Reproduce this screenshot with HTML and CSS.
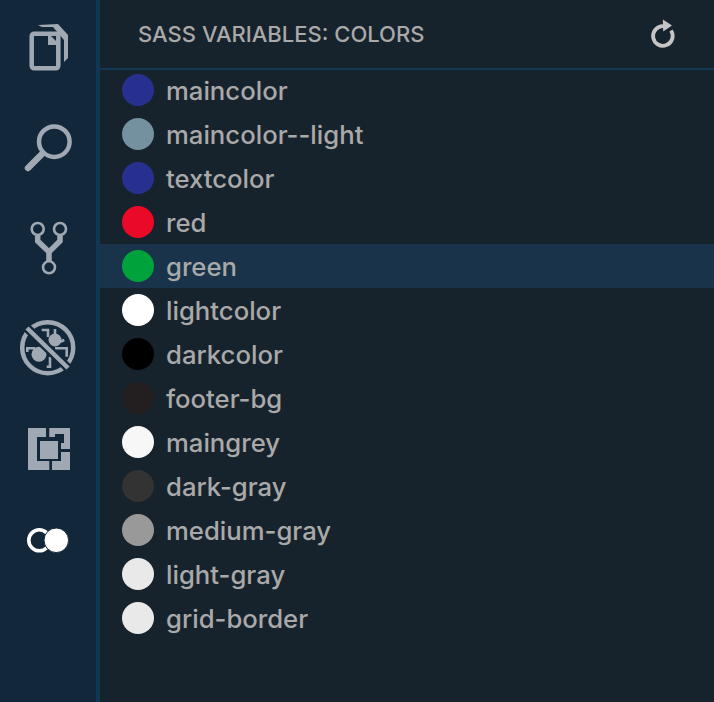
FILE: index.html
```html
<!DOCTYPE html>
<html lang="en">
<head>
  <meta charset="UTF-8">
  <title>Sass Variables: Colors</title>
  <link rel="stylesheet" href="styles.css">
</head>
<body>
  <div class="app">
    <nav class="activity-bar">
      <svg class="icon" viewBox="0 0 60 60">
        <path class="fill" d="M20 8 L40 7 L50 18 V41 L46 45 V23 L35 10 L24 10 Z"/>
        <rect class="line" x="13.7" y="16.7" width="26.6" height="34.6" rx="2.5"/>
        <path class="fill" d="M30 16 L42 28 H30 Z"/>
      </svg>
      <svg class="icon" viewBox="0 0 60 60">
        <circle class="line" cx="36.3" cy="24.7" r="15.3" stroke-width="4.5"/>
        <path class="line thick" d="M23 38 L10 51"/>
      </svg>
      <svg class="icon" viewBox="0 0 60 60">
        <circle class="line thin" cx="19.7" cy="12" r="6"/>
        <circle class="line thin" cx="42" cy="12" r="6"/>
        <circle class="line thin" cx="31" cy="50.3" r="6"/>
        <path class="line joint" d="M19.7 19 V24 L31 35 L42 24 V19 M31 35 V44"/>
      </svg>
      <svg class="icon" viewBox="0 0 60 60">
        <circle class="line" cx="29.7" cy="30.7" r="25.5"/>
        <circle class="fill" cx="21" cy="37.3" r="7.5"/>
        <circle class="fill" cx="37" cy="23" r="6.5"/>
        <path class="line thin" d="M9.3 35 V31.3 H17 M28.7 49.7 H32 V40 M23.7 13 H30 V20 M37 18 V12 M46.3 23 L38.7 26.3 M37 31.3 H48.7 V39.7"/>
        <path class="gap" d="M9 11 L50 51"/>
        <path class="line" d="M9 11 L50 51"/>
      </svg>
      <svg class="icon" viewBox="0 0 60 60">
        <path class="fill" d="M10 11 H28 V20 H19 V44 H31.3 V53 H10 Z"/>
        <path class="fill" d="M43 35 H52 V53 H34 V44 H43 Z"/>
        <path class="fill" d="M31.3 11 H52 V32 H43 V20 H31.3 Z"/>
        <path class="notch" d="M37 17 H46 V26 H43 V20 H37 Z"/>
        <rect class="fill" x="22" y="24" width="18" height="18"/>
      </svg>
      <svg class="icon" viewBox="0 0 60 60">
        <circle class="ring" cx="21.3" cy="23.3" r="10.5"/>
        <circle class="dot" cx="38.3" cy="23.3" r="12.3"/>
      </svg>
    </nav>

    <main class="panel">
      <header class="panel-header">
        <h2 class="panel-title">SASS VARIABLES: COLORS</h2>
        <svg class="refresh" viewBox="0 0 30 30">
          <path class="refresh-arc" d="M15.5 7.2 A9.8 9.8 0 1 0 23 11.5"/>
          <path class="refresh-head" d="M14.8 0.5 L24 6.6 L15.2 12.5 Z"/>
        </svg>
      </header>

      <ul class="color-list">
        <li class="color-row"><span class="swatch swatch-main"></span><span class="color-name">maincolor</span></li>
        <li class="color-row"><span class="swatch swatch-main-light"></span><span class="color-name">maincolor--light</span></li>
        <li class="color-row"><span class="swatch swatch-main"></span><span class="color-name">textcolor</span></li>
        <li class="color-row"><span class="swatch swatch-red"></span><span class="color-name">red</span></li>
        <li class="color-row selected"><span class="swatch swatch-green"></span><span class="color-name">green</span></li>
        <li class="color-row"><span class="swatch swatch-white"></span><span class="color-name">lightcolor</span></li>
        <li class="color-row"><span class="swatch swatch-black"></span><span class="color-name">darkcolor</span></li>
        <li class="color-row"><span class="swatch swatch-footer"></span><span class="color-name">footer-bg</span></li>
        <li class="color-row"><span class="swatch swatch-maingrey"></span><span class="color-name">maingrey</span></li>
        <li class="color-row"><span class="swatch swatch-dark"></span><span class="color-name">dark-gray</span></li>
        <li class="color-row"><span class="swatch swatch-medium"></span><span class="color-name">medium-gray</span></li>
        <li class="color-row"><span class="swatch swatch-light"></span><span class="color-name">light-gray</span></li>
        <li class="color-row"><span class="swatch swatch-light"></span><span class="color-name">grid-border</span></li>
      </ul>
    </main>
  </div>
</body>
</html>
```

FILE: styles.css
```css
html, body {
  height: 100%;
  margin: 0;
}

body {
  font-family: Inter, "Liberation Sans", sans-serif;
  background-color: #17232c;
  overflow: hidden;
}

.app {
  display: flex;
  height: 100%;
}

/* left icon strip */
.activity-bar {
  width: 96px;
  flex-shrink: 0;
  display: flex;
  flex-direction: column;
  align-items: center;
  gap: 40px;
  padding-top: 17px;
  background-color: #12273a;
  border-right: 4px solid #0f3855;
}

.icon {
  width: 60px;
  height: 60px;
  flex-shrink: 0;
}

.fill {
  fill: #a0a9b3;
}

.line {
  fill: none;
  stroke: #a0a9b3;
  stroke-width: 4.5;
}

.thin {
  stroke-width: 2.6;
}

.thick {
  stroke-width: 6.5;
  stroke-linecap: round;
}

.joint {
  stroke-width: 5.5;
}

.gap {
  fill: none;
  stroke: #12273a;
  stroke-width: 9;
}

.notch {
  fill: #12273a;
}

.ring {
  fill: none;
  stroke: #ffffff;
  stroke-width: 3.6;
}

.dot {
  fill: #ffffff;
  stroke: #12273a;
  stroke-width: 1;
}

/* main panel */
.panel {
  flex: 1;
  min-width: 0;
}

.panel-header {
  height: 68px;
  display: flex;
  align-items: center;
  justify-content: space-between;
  padding: 0 36px 0 38px;
  margin-bottom: -2px;
  border-bottom: 2px solid #0f3855;
}

.panel-title {
  margin: 0;
  font-size: 22px;
  font-weight: 450;
  color: #a9a9a9;
}

.refresh {
  width: 30px;
  height: 30px;
  overflow: visible;
}

.refresh-arc {
  fill: none;
  stroke: #c5c5c5;
  stroke-width: 3.8;
}

.refresh-head {
  fill: #c5c5c5;
}

.color-list {
  list-style: none;
  margin: 0;
  padding: 0;
}

.color-row {
  height: 44px;
  display: flex;
  align-items: center;
  gap: 12px;
  padding-left: 22px;
  font-size: 25.7px;
  font-weight: 450;
  color: #a9a9a9;
}

.color-row.selected {
  background-color: #19344a;
}

.color-name {
  padding-top: 1px;
}

.swatch {
  width: 32px;
  height: 32px;
  border-radius: 50%;
  flex-shrink: 0;
}

.swatch-main { background-color: #28308f; }
.swatch-main-light { background-color: #73919f; }
.swatch-red { background-color: #ea0a28; }
.swatch-green { background-color: #00a33b; }
.swatch-white { background-color: #ffffff; }
.swatch-black { background-color: #000000; }
.swatch-footer { background-color: #231f20; }
.swatch-maingrey { background-color: #f7f7f7; }
.swatch-dark { background-color: #333333; }
.swatch-medium { background-color: #999999; }
.swatch-light { background-color: #e9e9e9; }
```
